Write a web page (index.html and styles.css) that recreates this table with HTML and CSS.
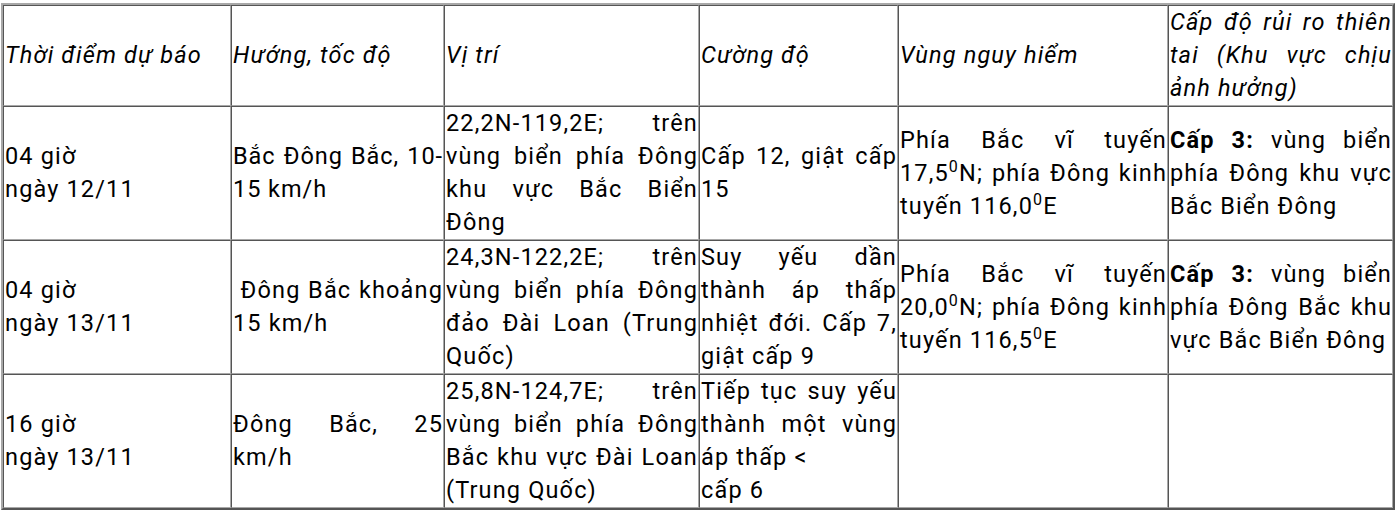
FILE: index.html
```html
<!DOCTYPE html>
<html lang="vi">
<head>
<meta charset="utf-8">
<link rel="stylesheet" href="styles.css">
</head>
<body>
<table class="forecast">
  <colgroup>
    <col class="c1"><col class="c2"><col class="c3"><col class="c4"><col class="c5"><col class="c6">
  </colgroup>
  <tr class="head">
    <td><em>Thời điểm dự báo</em></td>
    <td><em>Hướng, tốc độ</em></td>
    <td><em>Vị trí</em></td>
    <td><em>Cường độ</em></td>
    <td><em>Vùng nguy hiểm</em></td>
    <td><em>Cấp độ rủi ro thiên tai (Khu vực chịu ảnh hưởng)</em></td>
  </tr>
  <tr>
    <td>04 giờ<br>ngày 12/11</td>
    <td class="tight">Bắc Đông Bắc, 10-<wbr>15 km/h</td>
    <td>22,2N-119,2E; trên vùng biển phía Đông khu vực Bắc Biển Đông</td>
    <td>Cấp 12, giật cấp 15</td>
    <td>Phía Bắc vĩ tuyến 17,5<sup>0</sup>N; phía Đông kinh tuyến 116,0<sup>0</sup>E</td>
    <td><strong>Cấp 3:</strong> vùng biển phía Đông khu vực Bắc Biển Đông</td>
  </tr>
  <tr>
    <td>04 giờ<br>ngày 13/11</td>
    <td>&nbsp;Đông Bắc khoảng 15 km/h</td>
    <td>24,3N-122,2E; trên vùng biển phía Đông đảo Đài Loan (Trung Quốc)</td>
    <td>Suy yếu dần thành áp thấp nhiệt đới. Cấp 7, giật cấp 9</td>
    <td>Phía Bắc vĩ tuyến 20,0<sup>0</sup>N; phía Đông kinh tuyến 116,5<sup>0</sup>E</td>
    <td><strong>Cấp 3:</strong> vùng biển phía Đông Bắc khu vực Bắc Biển Đông</td>
  </tr>
  <tr>
    <td>16 giờ<br>ngày 13/11</td>
    <td>Đông Bắc, 25 km/h</td>
    <td>25,8N-124,7E; trên vùng biển phía Đông Bắc khu vực Đài Loan (Trung Quốc)</td>
    <td>Tiếp tục suy yếu thành một vùng áp thấp &lt;<br>cấp 6</td>
    <td></td>
    <td></td>
  </tr>
</table>
</body>
</html>
```

FILE: styles.css
```css
html, body {
  margin: 0;
  padding: 0;
  background: #fff;
}

body {
  font-family: Roboto, "Noto Sans", "DejaVu Sans", sans-serif;
  font-size: 23.5px;
  letter-spacing: 1.15px;
  line-height: 33px;
  color: #000;
}

.forecast {
  margin: 3px 0 0 1px;
  width: 1394px;
  table-layout: fixed;
  border-collapse: separate;
  border-spacing: 0;
  border-style: solid;
  border-width: 2px;
  border-color: #a8a8a8 #555 #555 #a8a8a8;
}

.c1 { width: 228px; }
.c2 { width: 213px; }
.c3 { width: 255px; }
.c4 { width: 199px; }
.c5 { width: 270px; }
.c6 { width: 225px; }

.forecast td {
  border-style: solid;
  border-width: 1px;
  border-color: #555 #a8a8a8 #a8a8a8 #555;
  padding: 0 0 0 1px;
  vertical-align: middle;
  text-align: justify;
}

.forecast td.tight {
  letter-spacing: 0.95px;
}

.forecast em {
  font-style: italic;
}

.forecast strong {
  font-weight: 700;
}

.forecast sup {
  font-size: 16px;
  line-height: 0;
  vertical-align: 9px;
}
```
